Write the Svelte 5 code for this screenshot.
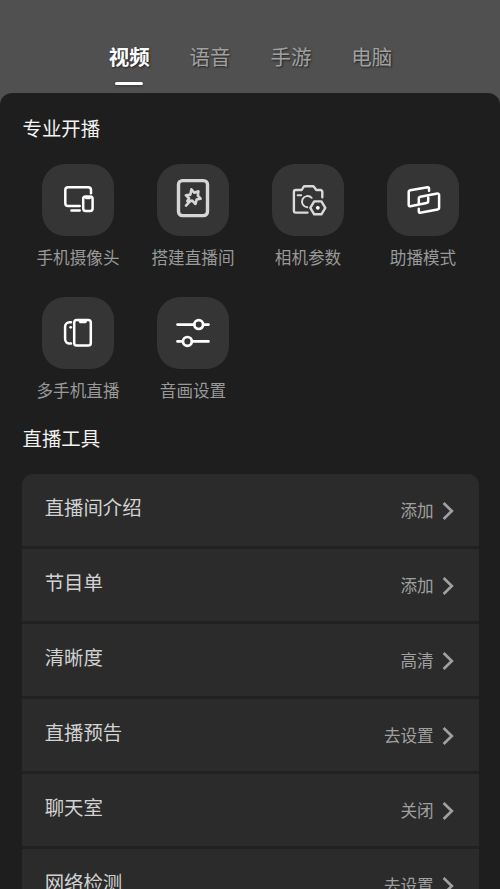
<script lang="ts">
	let activeTab = $state('视频');

	const tabs = ['视频', '语音', '手游', '电脑'];

	const features = [
		{ icon: 'camera', label: '手机摄像头' },
		{ icon: 'room', label: '搭建直播间' },
		{ icon: 'params', label: '相机参数' },
		{ icon: 'assist', label: '助播模式' },
		{ icon: 'phones', label: '多手机直播' },
		{ icon: 'sliders', label: '音画设置' }
	];

	const tools = [
		{ label: '直播间介绍', value: '添加' },
		{ label: '节目单', value: '添加' },
		{ label: '清晰度', value: '高清' },
		{ label: '直播预告', value: '去设置' },
		{ label: '聊天室', value: '关闭' },
		{ label: '网络检测', value: '去设置' }
	];
</script>

<div class="page">
	<nav class="tabs">
		{#each tabs as tab}
			<button class="tab" class:active={tab === activeTab} onclick={() => (activeTab = tab)}>
				{tab}
			</button>
		{/each}
	</nav>

	<main class="panel">
		<h2>专业开播</h2>
		<div class="features">
			{#each features as feature}
				<div class="feature">
					<div class="tile">
						<svg class={feature.icon} viewBox="0 0 72 72">
							{#if feature.icon === 'camera'}
								<path d="M49 29.3V26a2.8 2.8 0 0 0-2.8-2.8H26.1a2.8 2.8 0 0 0-2.8 2.8v13.2a2.8 2.8 0 0 0 2.8 2.8h11.6M29.4 46.6h8.3" />
								<rect x="41.2" y="32.6" width="9.4" height="14.4" rx="2.4" />
								<path d="M44.2 34h3.4" />
							{:else if feature.icon === 'room'}
								<rect x="21.5" y="16.6" width="29" height="35" rx="4" />
								<path class="star" d="M29 41.6 33.2 37.2M28.9 31.2 33.4 30.6 34.4 25.4 37.4 28.8 41.4 27.3 40.8 31.7 43.6 34.7 39.6 35.6 38.5 40 35.2 36.6 30.3 37.2 32.1 34.2Z" />
							{:else if feature.icon === 'params'}
								<path d="M50.3 33.3v-5.5a1.8 1.8 0 0 0-1.8-1.8h-4.2l-2.2-3a1.6 1.6 0 0 0-1.3-.7h-8a1.6 1.6 0 0 0-1.3.7l-1.8 3h-6a1.8 1.8 0 0 0-1.8 1.8v19a1.8 1.8 0 0 0 1.8 1.8h11.8" />
								<path class="fine" d="M25.6 31.3h3.6M39.7 33.8a5.6 5.6 0 1 0-4.4 9.4" />
								<path d="M42.2 37.4h7.2l3.9 6.4-3.9 6.5h-7.2l-3.9-6.5Z" />
								<circle class="solid" cx="45.8" cy="43.8" r="1.9" />
							{:else if feature.icon === 'assist'}
								<path d="M42 26.8v-2.4a1.2 1.2 0 0 0-1.4-1.2l-17.3 3a2 2 0 0 0-1.6 2v12.6a1.4 1.4 0 0 0 1.7 1.4l16.2-3.2a2 2 0 0 0 1.6-2v-3.4" />
								<path d="M31.8 44.8v2.7a1.2 1.2 0 0 0 1.4 1.2l17.3-3.2a2 2 0 0 0 1.6-2V31a1.4 1.4 0 0 0-1.7-1.4l-17 3.1a2 2 0 0 0-1.6 2v4.5" />
							{:else if feature.icon === 'phones'}
								<rect x="32.2" y="23" width="16.6" height="25.6" rx="2.6" />
								<path class="solid" d="M36 23.2h9.6l-1.6 3h-6.4Z" />
								<path d="M29 25.2h-1.4a4.5 4.5 0 0 0-4.5 4.5v12.4a4.5 4.5 0 0 0 4.5 4.5H29" />
								<circle class="solid" cx="28.7" cy="30.3" r="1.4" />
							{:else}
								<path d="M20.5 27.6h16.7m9 0h5.3M20.5 44.4h5.3m9.2 0h16.5" />
								<circle cx="41.7" cy="27.6" r="4.4" />
								<circle cx="30.4" cy="44.4" r="4.4" />
							{/if}
						</svg>
					</div>
					<span>{feature.label}</span>
				</div>
			{/each}
		</div>

		<h2>直播工具</h2>
		<div class="tools">
			{#each tools as tool}
				<div class="tool">
					<span class="name">{tool.label}</span>
					<span class="value">{tool.value}</span>
					<svg class="chevron" viewBox="0 0 12 20">
						<path d="M1.6 2 9.8 10 1.6 18" />
					</svg>
				</div>
			{/each}
		</div>
	</main>
</div>

<style>
	:global(body) {
		background: #505050;
	}

	.page {
		height: 889px;
		overflow: hidden;
		display: flex;
		flex-direction: column;
		background: #505050;
		font-family: 'Noto Sans CJK SC', sans-serif;
	}

	.tabs {
		flex: none;
		height: 93px;
		box-sizing: border-box;
		padding: 41px 0 0 1px;
		display: flex;
		justify-content: center;
		align-items: flex-start;
		gap: 39.9px;
	}

	.tab {
		display: flex;
		flex-direction: column;
		align-items: center;
		gap: 11px;
		padding: 0;
		border: none;
		background: none;
		color: #a0a0a0;
		font-family: inherit;
		font-size: 20.5px;
		line-height: 30px;
		text-shadow: 1px 1px 2px rgba(0, 0, 0, 0.6);
		cursor: pointer;
	}

	.tab.active {
		color: #fff;
		font-weight: 700;
	}

	.tab.active::after {
		content: '';
		width: 28px;
		height: 3px;
		border-radius: 1.5px;
		background: #fff;
		box-shadow: 0 1px 3px rgba(0, 0, 0, 0.3);
	}

	.panel {
		flex: 1;
		min-height: 0;
		overflow: hidden;
		padding: 20px 21px 0 22px;
		border-radius: 12px 12px 0 0;
		background: #1e1e1e;
	}

	h2 {
		margin: 0;
		padding-left: 0.5px;
		color: #f2f2f2;
		font-size: 19.4px;
		font-weight: 400;
		line-height: 30px;
	}

	.features {
		display: grid;
		grid-template-columns: repeat(4, 115px);
		row-gap: 27px;
		margin: 21px 0 20px -1.5px;
	}

	.feature {
		height: 106px;
		display: flex;
		flex-direction: column;
		align-items: center;
		gap: 8px;
		color: #999;
		font-size: 16.6px;
		line-height: 26px;
		white-space: nowrap;
	}

	.tile {
		width: 72px;
		height: 72px;
		border-radius: 23px;
		background: #353535;
	}

	.tile svg {
		display: block;
		fill: none;
		stroke: #fff;
		stroke-width: 2.5;
		stroke-linecap: round;
		stroke-linejoin: round;
	}

	.tile .room {
		stroke: #d6d6d6;
		stroke-width: 3.4;
	}

	.tile .room .star {
		stroke-width: 2.6;
	}

	.tile .params {
		stroke: #dadada;
		stroke-width: 2.4;
	}

	.tile .fine {
		stroke-width: 1.9;
	}

	.tile .solid {
		fill: #fff;
		stroke: none;
	}

	.tile .sliders {
		stroke-width: 2.7;
	}

	.tools {
		display: flex;
		flex-direction: column;
		gap: 3px;
		margin-top: 21px;
		border-radius: 11px 11px 0 0;
		overflow: hidden;
		background: #212121;
	}

	.tool {
		flex: none;
		height: 72px;
		box-sizing: border-box;
		padding: 0 25.3px 0 22.7px;
		display: flex;
		align-items: center;
		background: #2b2b2b;
	}

	.name {
		flex: 1;
		padding-bottom: 6px;
		color: #d2d2d2;
		font-size: 19.4px;
		line-height: 30px;
	}

	.value {
		margin-right: 8px;
		color: #a0a0a0;
		font-size: 16.6px;
		line-height: 26px;
	}

	.chevron {
		width: 12px;
		height: 20px;
		margin-top: 2px;
		fill: none;
		stroke: #a0a0a0;
		stroke-width: 2.7;
	}
</style>
